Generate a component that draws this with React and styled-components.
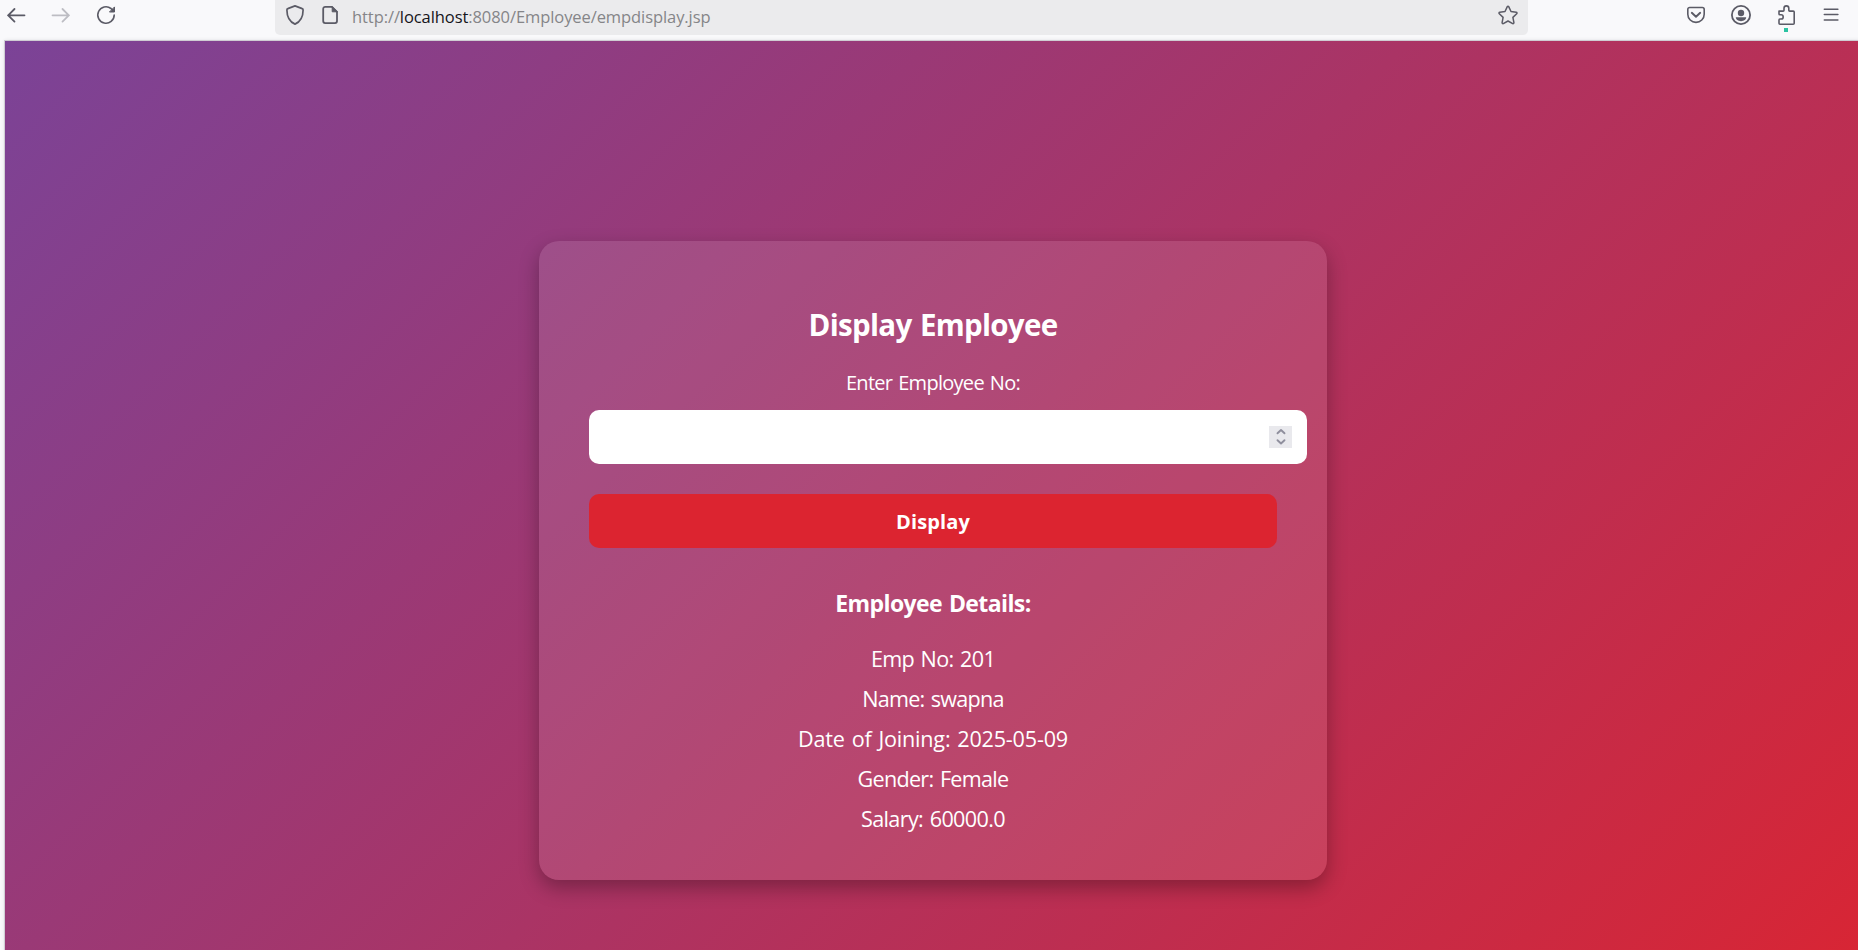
import React from "react";
import styled, { createGlobalStyle } from "styled-components";

const GlobalStyle = createGlobalStyle`
  html, body { margin: 0; height: 100%; overflow: hidden; }
  *, *::before, *::after { box-sizing: border-box; }
  #root { height: 100%; }
`;

const Browser = styled.div`
  height: 950px;
  display: flex;
  flex-direction: column;
  overflow: hidden;
  background: #f9f9fb;
  font-family: "Segoe UI", "Open Sans", "Noto Sans", sans-serif;
`;

const Toolbar = styled.header`
  flex: none;
  height: 41px;
  display: flex;
  align-items: flex-start;
`;

const NavGroup = styled.nav`
  width: 275px;
  display: flex;
  gap: 25px;
  padding: 5px 0 0 6px;
`;

const ActionGroup = styled.div`
  display: flex;
  gap: 25px;
  padding: 5px 0 0 158px;
`;

const Icon = styled.svg`
  display: block;
  flex: none;
  width: 20px;
  height: 20px;
  overflow: visible;
  fill: none;
  stroke: ${(p) => p.$color || "#5b5b66"};
  stroke-width: ${(p) => p.$stroke || 1.6};
  stroke-linecap: round;
  stroke-linejoin: round;
`;

const AddressBar = styled.div`
  width: 1253px;
  height: 35px;
  display: flex;
  padding: 5px 10px 0;
  gap: 15px;
  background: #ebebed;
  border-radius: 0 0 5px 5px;
`;

const Url = styled.div`
  flex: 1;
  height: 24px;
  margin-left: -3px;
  font-size: 16.5px;
  line-height: 24px;
  letter-spacing: ${(p) => p.$track}px;
  color: #858588;
  white-space: nowrap;
`;

const Host = styled.span`
  color: #15141a;
`;

const Viewport = styled.main`
  flex: none;
  width: 1856px;
  height: 1039px;
  margin-left: 5px;
  display: flex;
  align-items: center;
  justify-content: center;
  background: linear-gradient(135deg, #7b4397, #dc2430);
  box-shadow: 0 0 0 1px #cfcdd3, 0 0 4px rgba(58, 57, 68, 0.2);
`;

const Card = styled.section`
  width: 788px;
  height: 639px;
  padding: 50px;
  border-radius: 20px;
  color: #fff;
  text-align: center;
  background: rgba(255, 255, 255, 0.1);
  box-shadow: 0 8px 20px rgba(0, 0, 0, 0.3);
`;

const Line = styled.div`
  display: block;
  height: ${(p) => p.$height}px;
  font-size: ${(p) => p.$size}px;
  line-height: ${(p) => p.$height}px;
  font-weight: ${(p) => (p.$bold ? 700 : 400)};
  letter-spacing: ${(p) => p.$track || 0}px;
  word-spacing: 1.5px;
  white-space: nowrap;
`;

const Title = styled(Line).attrs({ as: "h2" })`
  margin: 14px 0 19px;
`;

const Field = styled.div`
  width: 718px;
  height: 54px;
  margin-top: 8px;
  padding-right: 15px;
  display: flex;
  align-items: center;
  justify-content: flex-end;
  border-radius: 10px;
  background: #fff;
`;

const Spinner = styled.div`
  width: 23px;
  height: 22px;
  display: grid;
  place-items: center;
  background: #e9e9ed;
`;

const SubmitButton = styled.button`
  display: block;
  width: 688px;
  height: 54px;
  margin: 30px 0 0;
  padding: 1px 0 0;
  border: 0;
  border-radius: 10px;
  color: #fff;
  background: #dc2430;
  font: 700 20px "Segoe UI", "Open Sans", "Noto Sans", sans-serif;
  letter-spacing: ${(p) => p.$track}px;
`;

const SectionTitle = styled(Line).attrs({ as: "h3" })`
  margin: 39px 0 20px;
`;

const details = [
  { text: "Emp No: 201", track: -0.65 },
  { text: "Name: swapna", track: -0.75 },
  { text: "Date of Joining: 2025-05-09", track: -0.2 },
  { text: "Gender: Female", track: -0.7 },
  { text: "Salary: 60000.0", track: -0.62 },
];

export default function App() {
  return (
    <Browser>
      <GlobalStyle />
      <Toolbar>
        <NavGroup>
          <Icon viewBox="0 0 20 20" $stroke={1.8}>
            <path d="M18.5 10.3H2M8.5 4L2.2 10.3l6.3 6.3" />
          </Icon>
          <Icon viewBox="0 0 20 20" $color="#bdbdc3" $stroke={1.8}>
            <path d="M1.5 10.3H18M11.5 4l6.3 6.3-6.3 6.3" />
          </Icon>
          <Icon viewBox="0 0 20 20" $stroke={1.6}>
            <path d="M18.2 10a8.2 8.2 0 1 1-3.2-6.5l2 2" />
            <path d="M18.5 2.3v4.7h-4.7z" fill="#5b5b66" strokeWidth="1" />
          </Icon>
        </NavGroup>
        <AddressBar>
          <Icon viewBox="0 0 20 20" $stroke={1.7}>
            <path d="M10 .9l7.2 2.7c.6.2.9.7.9 1.3C18.1 12 15.8 16.5 10 19.1 4.2 16.5 1.9 12 1.9 4.9c0-.6.3-1.1.9-1.3z" />
          </Icon>
          <Icon viewBox="0 0 20 20" $stroke={1.8}>
            <path d="M12 1.9H5.2a2 2 0 0 0-2 2v12.2a2 2 0 0 0 2 2h9.8a2 2 0 0 0 2-2V6.8z" />
            <path d="M12.2 2v4.8h4.8z" fill="#5b5b66" strokeWidth="1" />
          </Icon>
          <Url $track={-0.08}>
            http://<Host>localhost</Host>:8080/Employee/empdisplay.jsp
          </Url>
          <Icon viewBox="0 0 20 20" $stroke={1.5}>
            <path d="M9.3 1.6a.8.8 0 0 1 1.4 0l2.3 4.9 5.2.7c.8.1 1.1.9.5 1.5l-3.8 3.7 1 5.3c.1.7-.5 1.2-1.2.9L10 16l-4.700 2.600c-.7.3-1.3-.2-1.2-.9l1-5.3-3.8-3.7c-.6-.6-.3-1.4.5-1.5L7 6.5z" />
          </Icon>
        </AddressBar>
        <ActionGroup>
          <Icon viewBox="0 0 20 20" $stroke={1.6}>
            <path d="M3.7 2.5h12.6a1.9 1.9 0 0 1 1.9 1.9v4.8a8.2 8.2 0 0 1-16.4 0V4.4a1.9 1.9 0 0 1 1.9-1.9z" />
            <path d="M5.8 7.8l4.2 4 4.2-4" strokeWidth="1.9" />
          </Icon>
          <Icon viewBox="0 0 20 20" $stroke={1.8}>
            <circle cx="10" cy="10" r="9.1" />
            <circle cx="10" cy="8" r="3.2" fill="#5b5b66" stroke="none" />
            <path d="M4.8 12.3h10.4c0 2.3-2.3 3.9-5.2 3.9s-5.2-1.6-5.2-3.9z" fill="#5b5b66" stroke="none" />
          </Icon>
          <Icon viewBox="0 0 20 20" $stroke={1.6}>
            <path transform="translate(.8 .8)" d="M2.4 5.3h3.9c.6 0 .9-.3.9-.9V2.5a2.4 2.4 0 0 1 4.8 0v1.9c0 .6.3.9.9.9h3.500c.6 0 1 .4 1 1v11.200c0 .6-.4 1-1 1H3.200c-.6 0-1-.4-1-1v-3.400c0-.5.4-.9.9-.9h1.200a2.100 2.100 0 0 0 0-4.200H3.100c-.5 0-.9-.4-.9-.9V5.300z" />
            <path d="M8 23h4v4h-4z" fill="#2ac3a2" stroke="none" />
          </Icon>
          <Icon viewBox="0 0 20 20" $stroke={1.5}>
            <path d="M3.3 4.3h13.6M3.3 9.6h13.6M3.3 14.9h13.6" />
          </Icon>
        </ActionGroup>
      </Toolbar>
      <Viewport>
        <Card>
          <Title $height={40} $size={29.5} $bold $track={-0.7}>Display Employee</Title>
          <Line as="label" $height={38} $size={20} $track={-0.72}>
            Enter Employee No:
          </Line>
          <Field>
            <Spinner>
              <Icon viewBox="0 0 20 20" $color="#8f8f9d" $stroke={1.9}>
                <path d="M6.5 6.3L10 3l3.5 3.3M6.5 13.2l3.5 3.3 3.5-3.3" />
              </Icon>
            </Spinner>
          </Field>
          <SubmitButton type="button" $track={0.1}>Display</SubmitButton>
          <SectionTitle $height={32} $size={23} $bold $track={-0.6}>Employee Details:</SectionTitle>
          {details.map((d) => (
            <Line key={d.text} $height={40} $size={21.6} $track={d.track}>{d.text}</Line>
          ))}
        </Card>
      </Viewport>
    </Browser>
  );
}
